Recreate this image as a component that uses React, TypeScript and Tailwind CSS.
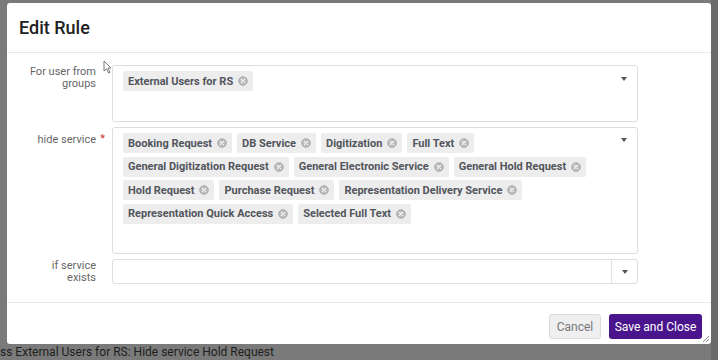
import React from 'react';

const services = [
  'Booking Request',
  'DB Service',
  'Digitization',
  'Full Text',
  'General Digitization Request',
  'General Electronic Service',
  'General Hold Request',
  'Hold Request',
  'Purchase Request',
  'Representation Delivery Service',
  'Representation Quick Access',
  'Selected Full Text',
];

function RemoveIcon() {
  return (
    <svg width="10" height="10" viewBox="0 0 10 10" className="shrink-0">
      <circle cx="5" cy="5" r="4.3" fill="#bdbdbd" stroke="#9e9e9e" strokeWidth="0.8" />
      <path d="M3.3 3.3 L6.7 6.7 M6.7 3.3 L3.3 6.7" stroke="#f5f5f5" strokeWidth="1.2" strokeLinecap="round" />
    </svg>
  );
}

function Chip({ label }: { label: string }) {
  return (
    <span className="inline-flex h-[20px] items-center gap-[5px] rounded-[2px] bg-[#ededed] pl-[5px] pr-[5px] text-[11px] font-bold leading-none text-[#52555c]">
      {label}
      <RemoveIcon />
    </span>
  );
}

function Caret() {
  return (
    <svg width="6" height="4" viewBox="0 0 6 4">
      <path d="M0 0 L6 0 L3 4 Z" fill="#555" />
    </svg>
  );
}

function FieldLabel({ children, required }: { children: React.ReactNode; required?: boolean }) {
  return (
    <div className="text-right text-[11px] leading-[12px] text-[#666]">
      <span className="relative">
        {children}
        {required && <span className="absolute -right-[9px] top-0 text-[#d32f2f]">*</span>}
      </span>
    </div>
  );
}

export default function App() {
  return (
    <div className="relative h-[360px] w-[718px] overflow-hidden bg-[#7a7a7a] font-['Roboto',sans-serif]">
      {/* page behind the overlay */}
      <div className="absolute left-0 top-[345px] whitespace-nowrap text-[12px] leading-[14px] text-[#1e1e1e]">
        ss External Users for RS: Hide service Hold Request
      </div>
      <div className="absolute right-0 top-0 h-[360px] w-[7px] bg-[#6a6a6a]" />

      <div className="relative ml-[7px] mt-[3px] flex h-[341px] w-[704px] flex-col rounded-[3px] bg-white">
        {/* Header */}
        <div className="flex h-[50px] items-center border-b border-[#e9e9e9] pl-[12px]">
          <h2 className="text-[18px] font-medium text-[#222]">Edit Rule</h2>
        </div>

        {/* Body */}
        <div className="flex flex-col gap-[5px] pb-[18px] pt-[12px]">
          <div className="flex gap-[16px]">
            <div className="w-[89px] pt-[1px]">
              <FieldLabel>
                For user from
                <br />
                groups
              </FieldLabel>
            </div>
            <div className="flex h-[57px] w-[526px] items-start justify-between rounded-[3px] border border-[#dedede] pl-[10px] pr-[10px] pt-[5px]">
              <div className="flex flex-wrap gap-[5px]">
                <Chip label="External Users for RS" />
              </div>
              <div className="pt-[6px]">
                <Caret />
              </div>
            </div>
          </div>

          <div className="flex gap-[16px]">
            <div className="w-[89px] pt-[7px]">
              <FieldLabel required>hide service</FieldLabel>
            </div>
            <div className="flex h-[127px] w-[526px] items-start justify-between rounded-[3px] border border-[#dedede] pl-[10px] pr-[10px] pt-[5px]">
              <div className="flex w-[480px] flex-wrap gap-x-[5px] gap-y-[3.5px]">
                {services.map((s) => (
                  <Chip key={s} label={s} />
                ))}
              </div>
              <div className="pt-[5px]">
                <Caret />
              </div>
            </div>
          </div>

          <div className="flex gap-[16px]">
            <div className="w-[89px] pt-[1px]">
              <FieldLabel>
                if service
                <br />
                exists
              </FieldLabel>
            </div>
            <div className="flex h-[25px] w-[526px] rounded-[3px] border border-[#dedede]">
              <div className="flex-1" />
              <div className="flex w-[26px] items-center justify-center border-l border-[#e2e2e2]">
                <Caret />
              </div>
            </div>
          </div>
        </div>

        {/* Footer */}
        <div className="flex flex-1 items-start justify-end gap-[8px] border-t border-[#e9e9e9] pr-[9px] pt-[11px]">
          <button className="h-[25px] w-[52px] rounded-[3px] border border-[#dcdcdc] bg-[#efefef] text-[12px] text-[#777]">
            Cancel
          </button>
          <button className="h-[25px] w-[93px] rounded-[3px] bg-[#4a148c] text-[12px] text-white">
            Save and Close
          </button>
        </div>

        <svg className="absolute bottom-[2px] right-[2px]" width="6" height="6" viewBox="0 0 6 6">
          <path d="M6 0 L0 6 M6 3 L3 6" stroke="#888" strokeWidth="1" />
        </svg>
      </div>

      {/* mouse pointer */}
      <svg className="absolute left-[103px] top-[60px]" width="9" height="14" viewBox="0 0 9 14">
        <path d="M1 1 L1 11 L3.5 8.8 L5.5 13 L7 12.3 L5 8.2 L8 8 Z" fill="#fff" stroke="#555" strokeWidth="0.8" />
      </svg>
    </div>
  );
}
